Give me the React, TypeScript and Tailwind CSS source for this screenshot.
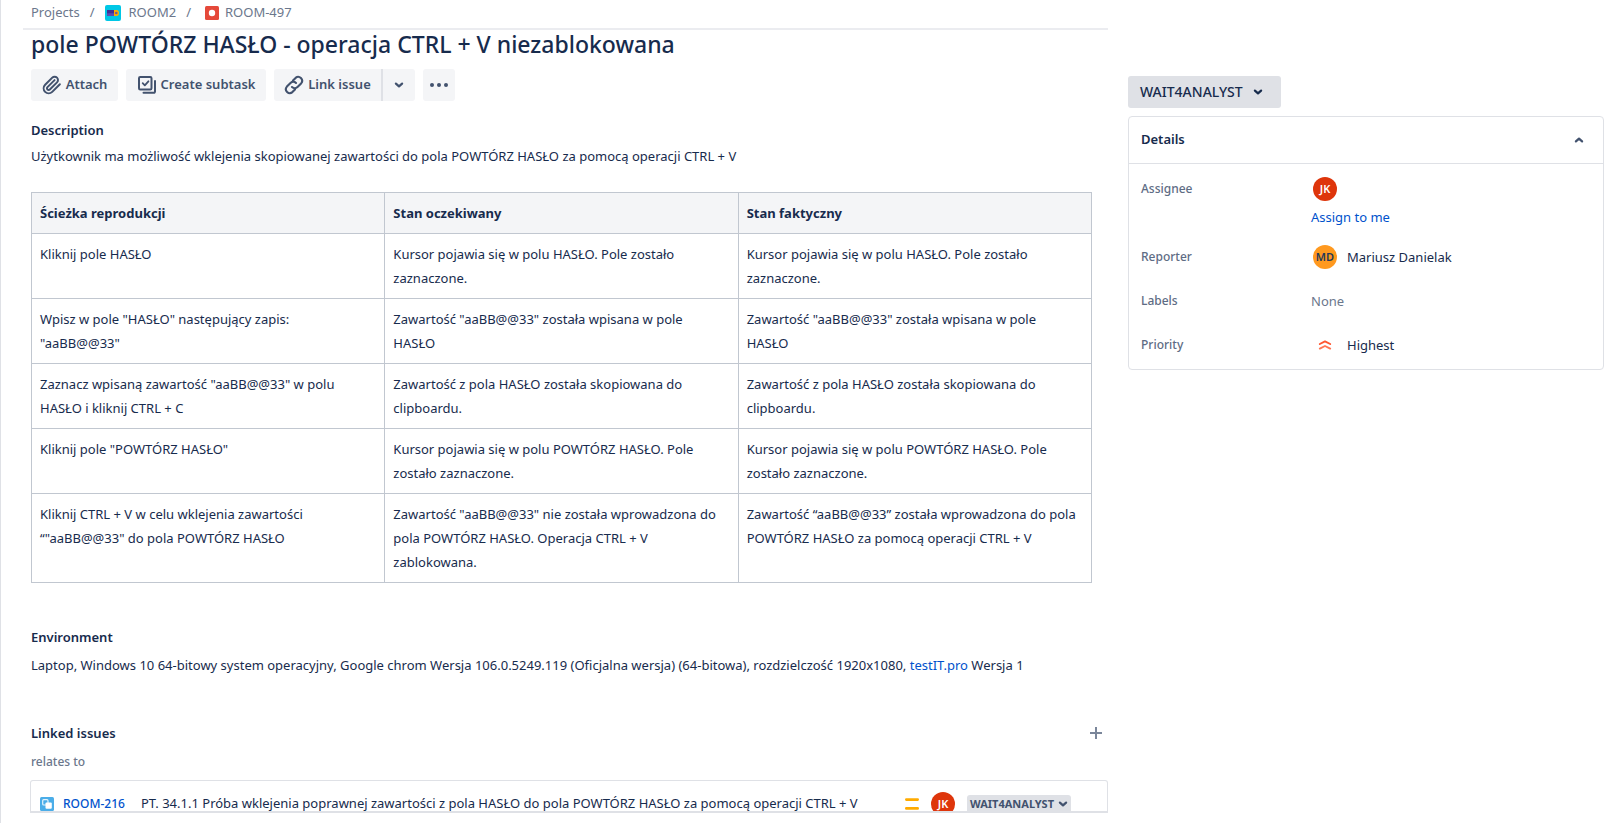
import type { ReactNode } from "react";

const ROWS: string[][] = [
  [
    "Kliknij pole HASŁO",
    "Kursor pojawia się w polu HASŁO. Pole zostało zaznaczone.",
    "Kursor pojawia się w polu HASŁO. Pole zostało zaznaczone.",
  ],
  [
    'Wpisz w pole "HASŁO" następujący zapis:\n"aaBB@@33"',
    'Zawartość "aaBB@@33" została wpisana w pole\nHASŁO',
    'Zawartość "aaBB@@33" została wpisana w pole\nHASŁO',
  ],
  [
    'Zaznacz wpisaną zawartość "aaBB@@33" w polu HASŁO i kliknij CTRL + C',
    "Zawartość z pola HASŁO została skopiowana do clipboardu.",
    "Zawartość z pola HASŁO została skopiowana do clipboardu.",
  ],
  [
    'Kliknij pole "POWTÓRZ HASŁO"',
    "Kursor pojawia się w polu POWTÓRZ HASŁO. Pole zostało zaznaczone.",
    "Kursor pojawia się w polu POWTÓRZ HASŁO. Pole zostało zaznaczone.",
  ],
  [
    'Kliknij CTRL + V w celu wklejenia zawartości\n“"aaBB@@33" do pola POWTÓRZ HASŁO',
    'Zawartość "aaBB@@33" nie została wprowadzona do pola POWTÓRZ HASŁO. Operacja CTRL + V\nzablokowana.',
    "Zawartość “aaBB@@33” została wprowadzona do pola POWTÓRZ HASŁO za pomocą operacji CTRL + V",
  ],
];

function Chevron({ up = false }: { up?: boolean }) {
  return (
    <svg width="10" height="6" viewBox="0 0 10 6" fill="none" stroke="currentColor" strokeWidth="2.2" strokeLinecap="round" strokeLinejoin="round" className="shrink-0" aria-hidden="true">
      <path d={up ? "M1.9 4.4 5 1.6l3.1 2.8" : "M1.9 1.6 5 4.4l3.1-2.8"} />
    </svg>
  );
}

function PaperclipIcon() {
  return (
    <svg width="20" height="20" viewBox="0 0 24 24" fill="none" stroke="currentColor" strokeWidth="2.4" strokeLinecap="round" strokeLinejoin="round" aria-hidden="true">
      <path d="m21.440 11.050-9.190 9.190a6 6 0 0 1-8.490-8.490l8.570-8.570A4 4 0 1 1 18 8.840l-8.590 8.570a2 2 0 0 1-2.830-2.830l8.490-8.480" />
    </svg>
  );
}

function SubtaskIcon() {
  return (
    <svg width="20" height="20" viewBox="0 0 20 20" fill="none" stroke="currentColor" strokeWidth="2" strokeLinecap="round" strokeLinejoin="round" aria-hidden="true">
      <rect x="2" y="2" width="12.5" height="12.5" rx="1.2" />
      <path d="m5.7 8.2 2.1 2.1 3.6-4" strokeWidth="1.8" />
      <path d="M18 6v10.6a1.2 1.2 0 0 1-1.2 1.2H6.5" />
    </svg>
  );
}

function LinkIcon() {
  return (
    <svg width="20" height="20" viewBox="2 2 20 20" fill="none" stroke="currentColor" strokeWidth="2.1" strokeLinecap="round" strokeLinejoin="round" aria-hidden="true">
      <path d="m11 7.500 2.600-2.600a3.900 3.900 0 0 1 5.500 5.500l-3.600 3.600a3.900 3.900 0 0 1-5.500 0" />
      <path d="m13 16.500-2.600 2.600a3.900 3.900 0 0 1-5.500-5.500L8.500 10a3.900 3.900 0 0 1 5.500 0" />
    </svg>
  );
}

function ProjectIcon() {
  return (
    <svg width="16" height="16" viewBox="0 0 16 16" aria-hidden="true">
      <rect width="16" height="16" rx="2" fill="#00c7e6" />
      <path d="M2 5h8v6H3a1 1 0 0 1-1-1z" fill="#403294" />
      <path d="M2 8.200h8V11H3a1 1 0 0 1-1-1z" fill="#5e4db2" />
      <path d="M9 5h2.500a2.500 3 0 0 1 0 6H9z" fill="#ffab00" />
      <circle cx="11.300" cy="8" r="1.300" fill="#6b5a9e" />
    </svg>
  );
}

function BugIcon() {
  return (
    <svg width="14" height="14" viewBox="0 0 14 14" aria-hidden="true">
      <rect width="14" height="14" rx="1.500" fill="#e5493a" />
      <circle cx="7" cy="7" r="3.200" fill="#fff" />
    </svg>
  );
}

function SubtaskTypeIcon() {
  return (
    <svg width="14" height="14" viewBox="0 0 14 14" className="shrink-0" aria-hidden="true">
      <rect width="14" height="14" rx="1.500" fill="#4bade8" />
      <rect x="2.700" y="2.700" width="5.300" height="5.300" rx="1" fill="none" stroke="#e4f3fc" strokeWidth="1.200" />
      <rect x="5.500" y="5.500" width="6.300" height="6.300" rx="1" fill="#fff" />
    </svg>
  );
}

function HighestIcon() {
  return (
    <svg width="14" height="12" viewBox="0 0 14 12" fill="none" stroke="#ff7452" strokeWidth="1.900" strokeLinecap="round" strokeLinejoin="round" aria-hidden="true">
      <path d="M1.800 5 7 2.400 12.200 5" stroke="#ff5630" />
      <path d="M1.800 9.600 7 7l5.200 2.600" />
    </svg>
  );
}

function ActionButton({ icon, children, className = "" }: { icon: ReactNode; children: ReactNode; className?: string }) {
  return (
    <button type="button" className={`flex h-8 items-center justify-center gap-1 bg-[#f4f5f7] text-[13px] font-semibold text-[#42526e] ${className}`}>
      {icon}
      {children}
    </button>
  );
}

function Avatar({ children, className }: { children: ReactNode; className: string }) {
  return <span className={`flex size-6 shrink-0 items-center justify-center rounded-full text-[11px] font-semibold ${className}`}>{children}</span>;
}

function Field({ label, children }: { label: string; children: ReactNode }) {
  return (
    <>
      <dt className="text-xs leading-6 font-medium text-[#5e6c84]">{label}</dt>
      <dd className="text-[13px] leading-6">{children}</dd>
    </>
  );
}

export default function App() {
  return (
    <div className="flex min-h-screen items-start gap-5 border-l border-[#dfe1e6] bg-white pr-[11px] font-['Noto_Sans','Open_Sans',sans-serif] text-[#172b4d]">
      <main className="min-w-0 flex-1 pl-[22px]">
        <nav aria-label="Breadcrumb" className="flex h-[30px] items-center border-b-2 border-[#ebecf0] pb-[3px] pl-2 text-[13px] text-[#6b778c]">
          <a href="#projects">Projects</a>
          <span className="px-2.5">/</span>
          <a href="#room2" className="flex items-center gap-2"><ProjectIcon />ROOM2</a>
          <span className="px-2.5">/</span>
          <a href="#room-497" className="ml-1 flex items-center gap-1.5"><BugIcon />ROOM-497</a>
        </nav>

        <div className="pl-2">
          <h1 className="text-[23px] leading-[29px] font-medium">pole POWTÓRZ HASŁO - operacja CTRL + V niezablokowana</h1>
          <div className="mt-2.5 flex gap-2">
            <ActionButton icon={<PaperclipIcon />} className="w-[87px] rounded-[3px]">Attach</ActionButton>
            <ActionButton icon={<SubtaskIcon />} className="w-[140px] rounded-[3px]">Create subtask</ActionButton>
            <div className="flex">
              <ActionButton icon={<LinkIcon />} className="w-[107px] rounded-l-[3px]">Link issue</ActionButton>
              <button type="button" aria-label="Link options" className="flex h-8 w-[34px] items-center justify-center rounded-r-[3px] border-l-2 border-[#dfe1e6] bg-[#f4f5f7] text-[#42526e]"><Chevron /></button>
            </div>
            <button type="button" aria-label="More actions" className="flex size-8 items-center justify-center rounded-[3px] bg-[#f4f5f7] text-[#42526e]">
              <svg width="20" height="4" viewBox="0 0 20 4" fill="currentColor" aria-hidden="true"><circle cx="3" cy="2" r="2" /><circle cx="10" cy="2" r="2" /><circle cx="17" cy="2" r="2" /></svg>
            </button>
          </div>

          <section className="mr-4">
            <h2 className="mt-[19px] text-[13px] leading-5 font-semibold">Description</h2>
            <p className="mt-1 text-[13px] leading-6">Użytkownik ma możliwość wklejenia skopiowanej zawartości do pola POWTÓRZ HASŁO za pomocą operacji CTRL + V</p>
            <table className="mt-6 w-full table-fixed border-collapse border border-[#c1c7d0] text-left text-[13px] leading-6">
              <thead>
                <tr className="bg-[#f4f5f7]">
                  {["Ścieżka reprodukcji", "Stan oczekiwany", "Stan faktyczny"].map((t) => (
                    <th key={t} scope="col" className="border border-[#c1c7d0] p-2 font-bold">{t}</th>
                  ))}
                </tr>
              </thead>
              <tbody>
                {ROWS.map((row) => (
                  <tr key={row[0]}>
                    {row.map((cell, i) => (
                      <td key={i} className="border border-[#c1c7d0] p-2 align-top whitespace-pre-line">{cell}</td>
                    ))}
                  </tr>
                ))}
              </tbody>
            </table>
          </section>

          <section>
            <h2 className="mt-11 text-[13px] leading-5 font-semibold">Environment</h2>
            <p className="mt-1.5 text-[13px] leading-6">
              Laptop, Windows 10 64-bitowy system operacyjny, Google chrom Wersja 106.0.5249.119 (Oficjalna wersja) (64-bitowa), rozdzielczość 1920x1080,{" "}
              <a href="#testit" className="text-[#0052cc]">testIT.pro</a> Wersja 1
            </p>
          </section>

          <section>
            <div className="mt-[46px] flex items-center justify-between pr-1.5">
              <h2 className="text-[13px] leading-5 font-semibold">Linked issues</h2>
              <button type="button" aria-label="Link another issue" className="text-[#7a869a]">
                <svg width="12" height="12" viewBox="0 0 12 12" stroke="currentColor" strokeWidth="2" aria-hidden="true"><path d="M6 0v12M0 6h12" /></svg>
              </button>
            </div>
            <h3 className="mt-[9px] text-xs leading-5 font-medium text-[#6b778c]">relates to</h3>
            <div className="mt-2 -ml-px h-[33px] overflow-hidden rounded-t-[3px] border border-b-2 border-[#dfe1e6]">
              <div className="flex h-[46px] items-center pr-9 pl-[9px] text-[13px]">
                <SubtaskTypeIcon />
                <a href="#room-216" className="ml-[9px] w-[78px] shrink-0 text-xs font-medium text-[#0052cc]">ROOM-216</a>
                <span className="flex-1 truncate">PT. 34.1.1 Próba wklejenia poprawnej zawartości z pola HASŁO do pola POWTÓRZ HASŁO za pomocą operacji CTRL + V</span>
                <svg width="14" height="12" viewBox="0 0 14 12" stroke="#ffab00" strokeWidth="2.600" strokeLinecap="round" className="shrink-0" role="img" aria-label="Medium priority"><path d="M1.300 1.600h11.400M1.300 10.400h11.400" /></svg>
                <Avatar className="ml-3 bg-[#de350b] text-white">JK</Avatar>
                <button type="button" className="ml-3 flex h-[18px] w-[104px] items-center justify-center gap-1 rounded-[3px] bg-[#dfe1e6] text-[11px] font-bold text-[#42526e]">WAIT4ANALYST<Chevron /></button>
              </div>
            </div>
          </section>
        </div>
      </main>

      <aside className="mt-[76px] w-[476px] shrink-0">
        <button type="button" className="flex h-8 w-[153px] items-center gap-2.5 rounded-[3px] bg-[#dfe1e6] px-3 text-sm font-medium">WAIT4ANALYST<Chevron /></button>
        <section className="mt-2 rounded border border-[#dfe1e6]">
          <div className="flex h-[47px] items-center justify-between border-b border-[#dfe1e6] pr-[19px] pl-3">
            <h2 className="text-[13px] font-semibold">Details</h2>
            <button type="button" aria-label="Collapse details" className="text-[#42526e]"><Chevron up /></button>
          </div>
          <dl className="grid grid-cols-[170px_1fr] gap-y-5 px-3 pt-[13px] pb-3">
            <Field label="Assignee">
              <Avatar className="ml-0.5 bg-[#de350b] text-white">JK</Avatar>
              <a href="#assign" className="mt-2 block leading-4 text-[#0052cc]">Assign to me</a>
            </Field>
            <Field label="Reporter">
              <span className="flex items-center gap-2.5"><Avatar className="ml-0.5 bg-[#ff991f] text-[#253858]">MD</Avatar>Mariusz Danielak</span>
            </Field>
            <Field label="Labels"><span className="text-[#6b778c]">None</span></Field>
            <Field label="Priority">
              <span className="flex items-center gap-2.5"><span className="ml-0.5 flex w-6 justify-center"><HighestIcon /></span>Highest</span>
            </Field>
          </dl>
        </section>
      </aside>
    </div>
  );
}
